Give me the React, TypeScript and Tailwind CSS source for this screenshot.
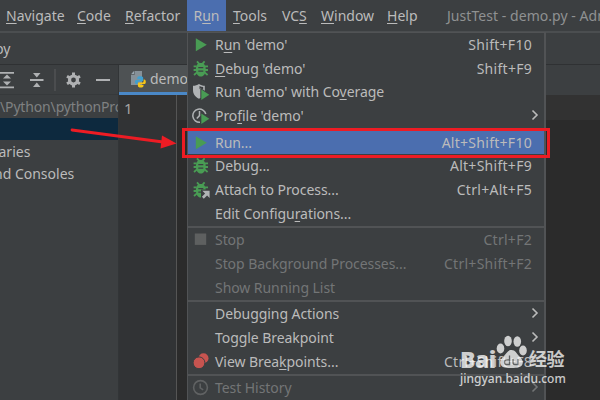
import type { ReactNode } from 'react'

type Item = {
  label: string
  // index of the underlined mnemonic letter
  mnemonic?: number
  shortcut?: string
  icon?: ReactNode
  arrow?: boolean
  active?: boolean
  disabled?: boolean
}

function Mnemonic({ text, at }: { text: string; at?: number }) {
  if (at === undefined) return <>{text}</>
  return (
    <>
      {text.slice(0, at)}
      <span className="underline decoration-1 underline-offset-2">{text[at]}</span>
      {text.slice(at + 1)}
    </>
  )
}

const PlayIcon = () => (
  <svg width="18" height="18" viewBox="0 0 18 18"><path d="M3.8 2.2v13L14.8 8.7z" fill="#499c54" /></svg>
)

const BugShape = () => (
  <g fill="none" stroke="#499c54" strokeWidth="1.8">
    <path d="M5 1.3l2.6 3M12.6 1.3L10 4.3M1.6 6.4h3M1.6 10h3M2 15l3-2.6M16 6.4h-3M16 10h-3M15.6 15l-3-2.6" />
    <path d="M8.8 3c3.2 0 4.9 2.2 4.9 6.2s-1.8 7.3-4.9 7.3-4.9-3.3-4.9-7.3S5.6 3 8.8 3z" fill="#499c54" stroke="none" />
    <path d="M6.3 7.7h5M6.3 11.2h5" stroke="#3c3f41" strokeWidth="1.3" />
  </g>
)

const BugIcon = () => (
  <svg width="18" height="18" viewBox="0 0 18 18"><BugShape /></svg>
)

const AttachIcon = () => (
  <svg width="18" height="18" viewBox="0 0 18 18">
    <BugShape />
    <path d="M9 8.5h9V18H9z" fill="#3c3f41" />
    <path d="M10.3 9.7h7.3v7.3l-2.5-2.5-3.3 3.2-1.9-1.9 3.2-3.3z" fill="#b0b3b5" />
  </svg>
)

const CoverageIcon = () => (
  <svg width="18" height="18" viewBox="0 0 18 18">
    <path d="M1 2.8C3.3 2.7 5.3 2.1 7 1c1.7 1.1 3.6 1.7 5.8 1.8v5L8.3 5.3v9.6l-1.3.9C2.8 13.5 1 10.8 1 7z" fill="#b0b3b5" />
    <path d="M7.5 3c1.2.6 2.3.9 3.7 1v3L8.3 5.3l-.8 1z" fill="#3c3f41" />
    <path d="M9.3 6.5V17l8-5.2z" fill="#499c54" />
  </svg>
)

const ProfileIcon = () => (
  <svg width="18" height="18" viewBox="0 0 18 18">
    <path d="M8 15.3A6.6 6.6 0 1 1 13.8 7" fill="none" stroke="#b0b3b5" strokeWidth="1.5" />
    <path d="M7.5 4v4.6L4.8 11.500" fill="none" stroke="#b0b3b5" strokeWidth="1.5" />
    <path d="M9.3 6.5V17l8-5.2z" fill="#499c54" />
  </svg>
)

const StopIcon = () => (
  <svg width="18" height="18" viewBox="0 0 18 18"><path d="M2.8 2.5h11.4v11.4H2.8z" fill="#5e6060" /></svg>
)

const BreakpointsIcon = () => (
  <svg width="18" height="18" viewBox="0 0 18 18">
    <circle cx="11.5" cy="5.3" r="5" fill="#c75450" />
    <circle cx="7" cy="9.8" r="5.9" fill="#c75450" stroke="#3c3f41" strokeWidth="1" />
  </svg>
)

const HistoryIcon = () => (
  <svg width="18" height="18" viewBox="0 0 18 18" fill="none" stroke="#606263" strokeWidth="1.6">
    <circle cx="8.5" cy="8.5" r="6.9" />
    <path d="M8.2 4.5v4.4l3 2" />
  </svg>
)

const groups: Item[][] = [
  [
    { label: "Run 'demo'", mnemonic: 1, shortcut: 'Shift+F10', icon: <PlayIcon /> },
    { label: "Debug 'demo'", mnemonic: 0, shortcut: 'Shift+F9', icon: <BugIcon /> },
    { label: "Run 'demo' with Coverage", mnemonic: 18, icon: <CoverageIcon /> },
    { label: "Profile 'demo'", mnemonic: 3, icon: <ProfileIcon />, arrow: true },
  ],
  [
    { label: 'Run...', shortcut: 'Alt+Shift+F10', icon: <PlayIcon />, active: true },
    { label: 'Debug...', shortcut: 'Alt+Shift+F9', icon: <BugIcon /> },
    { label: 'Attach to Process...', shortcut: 'Ctrl+Alt+F5', icon: <AttachIcon /> },
    { label: 'Edit Configurations...', mnemonic: 12 },
  ],
  [
    { label: 'Stop', shortcut: 'Ctrl+F2', icon: <StopIcon />, disabled: true },
    { label: 'Stop Background Processes...', shortcut: 'Ctrl+Shift+F2', disabled: true },
    { label: 'Show Running List', disabled: true },
  ],
  [
    { label: 'Debugging Actions', arrow: true },
    { label: 'Toggle Breakpoint', arrow: true },
    { label: 'View Breakpoints...', mnemonic: 9, shortcut: 'Ctrl+Shift+F8', icon: <BreakpointsIcon /> },
  ],
  [{ label: 'Test History', icon: <HistoryIcon />, arrow: true, disabled: true }],
]

function Row({ item }: { item: Item }) {
  const tone = item.disabled ? 'text-[#737576]' : 'text-[#bbbbbb]'
  return (
    <div className={`flex h-[23.7px] items-center pl-1 ${tone} ${item.active ? 'bg-[#4b6eaf]' : ''}`}>
      <span className="w-[23px] shrink-0">{item.icon}</span>
      <span className="flex-1 tracking-[-0.06px]"><Mnemonic text={item.label} at={item.mnemonic} /></span>
      {item.shortcut && <span className="pr-3 tracking-[0.28px]">{item.shortcut}</span>}
      {item.arrow && (
        <svg className="mb-0.5 mr-[5px]" width="8" height="12" viewBox="0 0 8 12" fill="none" stroke="currentColor" strokeWidth="1.6">
          <path d="M1.5 1.5L6 6l-4.5 4.5" />
        </svg>
      )}
    </div>
  )
}

function RunMenu() {
  return (
    <div className="absolute left-[187px] top-8 h-[380px] w-[359px] border-l border-r-2 border-t border-[#515355] bg-[#3c3f41]">
      {groups.map((group, i) => (
        <div key={i}>
          {i > 0 && <div className="flex h-[3px] items-center"><div className="h-[1.5px] w-full bg-[#515355]" /></div>}
          {group.map((item) => <Row key={item.label} item={item} />)}
        </div>
      ))}
    </div>
  )
}

function MenuBar() {
  return (
    <div className="flex h-[33px] shrink-0 items-center border-b-2 border-[#4b4e50] bg-[#3c3f41]">
      <span className="w-[71px] shrink-0 pl-1.5"><Mnemonic text="Navigate" at={0} /></span>
      <span className="w-12 shrink-0 pl-1.5"><Mnemonic text="Code" at={0} /></span>
      <span className="w-[68px] shrink-0 pl-1.5"><Mnemonic text="Refactor" at={0} /></span>
      <span className="flex h-[31px] w-[39px] shrink-0 items-center justify-center bg-[#4b6eaf]"><span><Mnemonic text="Run" at={1} /></span></span>
      <span className="w-[49px] shrink-0 pl-[7px]"><Mnemonic text="Tools" at={0} /></span>
      <span className="w-[39px] shrink-0 pl-[7px]"><Mnemonic text="VCS" at={2} /></span>
      <span className="w-[66px] shrink-0 pl-[7px]"><Mnemonic text="Window" at={0} /></span>
      <span className="w-[67px] shrink-0 pl-[7px]"><Mnemonic text="Help" at={0} /></span>
      <span className="shrink-0 tracking-[0.05px] text-[#8f9192]">JustTest - demo.py - Admin</span>
    </div>
  )
}

function ProjectPanel() {
  return (
    <div className="w-[118px] shrink-0 overflow-hidden bg-[#3c3f41]">
      <div className="flex h-[30px] items-center border-b border-[#36393b]">
        <svg width="118" height="30" viewBox="0 0 118 30" fill="none" stroke="#afb1b3" strokeWidth="1.8">
          <path d="M0 7.9h14M0 22.3h14M30 15h13.5M96 15h14" />
          <path d="M3 13.5L7 9.5l4 4zM3 16.500l4 4 4-4zM33 8h7.500l-3.700 4.500zM33 22l3.800-4.500L40.500 22z" fill="#afb1b3" stroke="none" />
          <path d="M55 4v22" stroke="#515355" strokeWidth="1.5" />
          <circle cx="73.5" cy="15" r="4" strokeWidth="3.2" />
          <path d="M73.5 7.5v3M73.5 19.5v3M67 11.2l2.6 1.5M77.4 17.3l2.6 1.5M67 18.8l2.6-1.5M77.4 12.7l2.6-1.5" strokeWidth="3" />
        </svg>
      </div>
      <div className="flex h-[23px] items-center whitespace-nowrap tracking-[-0.15px] text-[#7f8182]">\Python\pythonProject</div>
      <div className="h-[22px] bg-[#0d293e]" />
      <div className="flex h-[23px] items-center"><span className="-ml-[7px]">raries</span></div>
      <div className="flex h-[22px] items-center"><span className="-ml-1.5">nd Consoles</span></div>
    </div>
  )
}

function PythonFileIcon() {
  return (
    <svg className="shrink-0" width="16" height="18" viewBox="0 0 16 18">
      <path d="M4.5 1H12v14H1V5h3.5z" fill="#9aa7b0" fillOpacity=".75" />
      <path d="M1 4.2L4 1v3.2z" fill="#9aa7b0" />
      <path d="M10 6.3c-2 0-2.7.6-2.7 1.8v1h3.2v.6H6.7C5.4 9.7 5 10.7 5 12s.5 2.3 1.6 2.3h1v-1.2c0-1 .8-1.7 1.8-1.7h2.5c.8 0 1.3-.6 1.3-1.3V8.1c0-1.2-.8-1.8-3.2-1.8z" fill="#40a0d0" />
      <path d="M10.8 17.5c2 0 2.700-.6 2.700-1.800v-1h-3.200v-.6h3.800c1.300 0 1.700-1 1.700-2.200s-.5-2.300-1.500-2.300h-.7v1.400c0 1-.8 1.600-1.700 1.600H9.200c-.9 0-1.300.6-1.300 1.300v1.800c0 1.200.8 1.800 2.900 1.800z" fill="#f5c518" />
    </svg>
  )
}

function Editor() {
  return (
    <div className="flex flex-1 flex-col border-l border-[#323537] bg-[#2b2b2b]">
      <div className="flex h-[30px] bg-[#3c3f41]">
        <div className="flex w-[100px] items-center gap-1 border-b-[3px] border-[#4a88c7] bg-[#4e5254] pl-[11px]">
          <PythonFileIcon />
          <span>demo.py</span>
        </div>
      </div>
      <div className="flex flex-1">
        <div className="w-[58px] border-r border-[#555555] bg-[#313335] text-[#a4a3a3]">
          <div className="h-[25px] bg-[#323232] pl-[5px] pt-[3px] text-[15px]">1</div>
        </div>
        <div className="flex-1"><div className="h-[25px] bg-[#323232]" /></div>
      </div>
    </div>
  )
}

function Watermark() {
  return (
    <div className="absolute left-[460px] top-[335px] h-[50px] w-[108px] text-white opacity-75">
      <span className="absolute left-0 top-[11px] font-['Open_Sans',sans-serif] text-[23px] font-extrabold leading-[26px] tracking-[-0.6px]">Bai</span>
      <svg className="absolute left-[35px] top-0" width="34" height="35" viewBox="0 0 34 35" fill="currentColor">
        <ellipse cx="5.5" cy="13.5" rx="3.8" ry="5" />
        <ellipse cx="13" cy="6" rx="3.8" ry="5.2" />
        <ellipse cx="22.3" cy="6.5" rx="3.8" ry="5.2" />
        <ellipse cx="28" cy="15.5" rx="3.8" ry="5" />
        <path d="M16.5 15c4 0 5 3.5 7.5 6 3 2.8 4.5 5 3.5 8-1 3.5-5 4-11 4s-10-.5-11-4c-1-3 .5-5.2 3.5-8 2.5-2.5 3.5-6 7.5-6z" />
        {/* "du" mark in the paw */}
        <path d="M14.5 20.5v9h-3q-2 0-2-2.3t2-2.3h3M18 24v3.5q0 2 2 2h3V24" fill="none" stroke="#6a6d6e" strokeWidth="1.3" />
      </svg>
      <span className="absolute left-[69px] top-[11px] whitespace-nowrap font-['Noto_Sans_CJK_SC',sans-serif] text-[18px] font-bold leading-[24px] tracking-[-0.5px]">经验</span>
      <span className="absolute left-0 top-[36px] whitespace-nowrap font-['Noto_Sans',sans-serif] text-[12px] font-medium leading-[15px]">jingyan.baidu.com</span>
    </div>
  )
}

export default function App() {
  return (
    <div className="relative flex h-[400px] w-[600px] flex-col overflow-hidden bg-[#3c3f41] font-['Noto_Sans',sans-serif] text-[14px] leading-5 text-[#bbbbbb]">
      <MenuBar />
      <div className="flex h-8 shrink-0 items-center border-b border-[#2f3133]"><span className="-ml-[5px]">py</span></div>
      <div className="flex flex-1">
        <ProjectPanel />
        <Editor />
      </div>
      <RunMenu />
      {/* callout around the Run... entry */}
      <div className="absolute left-[182px] top-[128px] h-[30px] w-[368px] border-[3px] border-[#ed1c24]" />
      <svg className="absolute left-[65px] top-[120px]" width="115" height="35" viewBox="0 0 115 35">
        <path d="M7 10L98 22" stroke="#ed1c24" strokeWidth="2.8" strokeLinecap="round" />
        <path d="M97 15.5L111.5 23.5 95.5 28.5z" fill="#ed1c24" />
      </svg>
      <Watermark />
    </div>
  )
}
